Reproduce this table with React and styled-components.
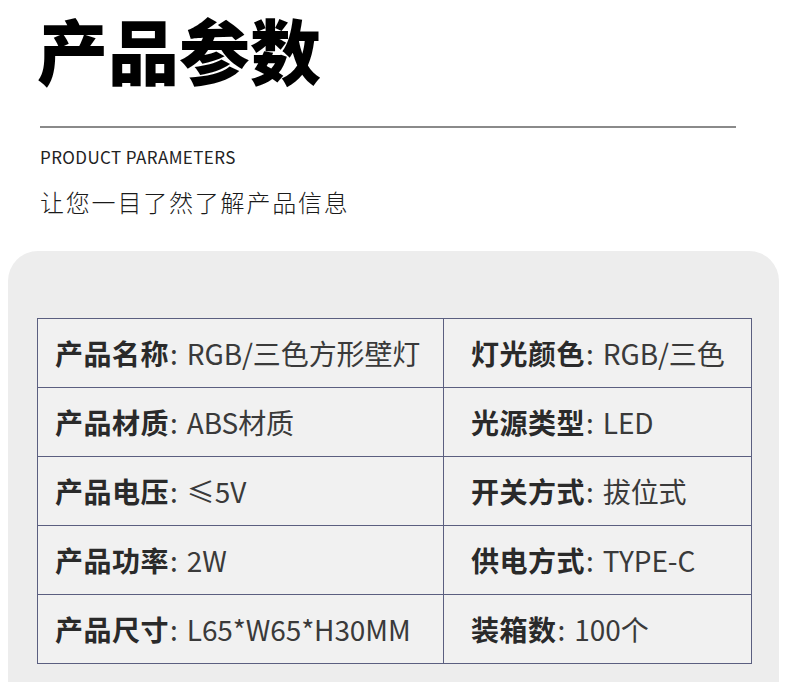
import styled, { createGlobalStyle } from 'styled-components';

const GlobalStyle = createGlobalStyle`
  body {
    margin: 0;
    background: #fff;
    font-family: "Noto Sans CJK SC", "Noto Sans", sans-serif;
    color: #222;
  }
`;

const Page = styled.div`
  width: 790px;
  height: 682px;
  overflow: hidden;
  background: #fff;
`;

const Header = styled.div`
  padding: 2px 54px 0 37px;
`;

const Title = styled.h1`
  margin: 0;
  font-size: 71px;
  line-height: 92px;
  font-weight: 900;
  color: #000;
`;

const Rule = styled.div`
  height: 2px;
  background: #8a8a8a;
  margin: 32px 0 0 3px;
`;

const SubTitle = styled.p`
  margin: 17px 0 0 3px;
  font-size: 17px;
  line-height: 24px;
  color: #222;
  letter-spacing: 0.4px;
`;

const Slogan = styled.p`
  margin: 16px 0 0 3px;
  font-size: 24px;
  line-height: 34px;
  font-weight: 300;
  color: #1a1a1a;
  letter-spacing: 1.8px;
`;

const Panel = styled.div`
  margin: 32px 11px 0 8px;
  height: 500px;
  background: #ededed;
  border-radius: 30px 30px 0 0;
  padding: 67px 27px 0 29px;
`;

const Table = styled.div`
  display: grid;
  grid-template-columns: 406px 308px;
  border-top: 1px solid #5b5f80;
  border-left: 1px solid #5b5f80;
  background: #f1f1f1;
  width: 714px;
`;

const Cell = styled.div`
  height: 68px;
  display: flex;
  align-items: center;
  padding-left: ${(p) => (p.right ? '27px' : '17px')};
  border-right: 1px solid #5b5f80;
  border-bottom: 1px solid #5b5f80;
  font-size: 28px;
  color: #333;
  white-space: nowrap;
`;

const Label = styled.span`
  font-weight: 700;
  color: #2a2a2a;
  letter-spacing: 0.5px;
`;

const Colon = styled.span`
  margin: 0 9px 0 1px;
  color: #3a3a3a;
`;

const Value = styled.span`
  font-weight: 400;
  color: #3a3a3a;
  letter-spacing: -0.1px;
`;

const rows = [
  ['产品名称', 'RGB/三色方形壁灯', '灯光颜色', 'RGB/三色'],
  ['产品材质', 'ABS材质', '光源类型', 'LED'],
  ['产品电压', '≤5V', '开关方式', '拔位式'],
  ['产品功率', '2W', '供电方式', 'TYPE-C'],
  ['产品尺寸', 'L65*W65*H30MM', '装箱数', '100个'],
];

export default function App() {
  return (
    <Page>
      <GlobalStyle />
      <Header>
        <Title>产品参数</Title>
        <Rule />
        <SubTitle>PRODUCT PARAMETERS</SubTitle>
        <Slogan>让您一目了然了解产品信息</Slogan>
      </Header>
      <Panel>
        <Table>
          {rows.map((r) => [
            <Cell key={r[0]}>
              <Label>{r[0]}</Label>
              <Colon>:</Colon>
              <Value>{r[1]}</Value>
            </Cell>,
            <Cell key={r[2]} right>
              <Label>{r[2]}</Label>
              <Colon>:</Colon>
              <Value>{r[3]}</Value>
            </Cell>,
          ])}
        </Table>
      </Panel>
    </Page>
  );
}
